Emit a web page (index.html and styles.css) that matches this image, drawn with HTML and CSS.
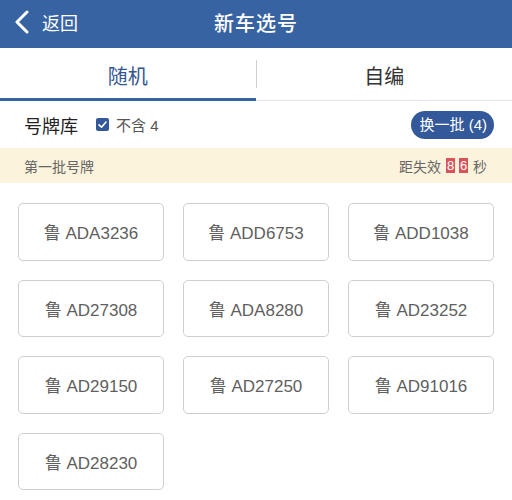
FILE: index.html
```html
<!DOCTYPE html>
<html lang="zh">
<head>
<meta charset="utf-8">
<link rel="stylesheet" href="styles.css">
</head>
<body>
<div class="page">
  <header class="nav">
    <div class="back">
      <svg class="chev" width="16" height="24" viewBox="0 0 16 24"><path d="M13 2 L3 12 L13 22" fill="none" stroke="#fff" stroke-width="3" stroke-linecap="round" stroke-linejoin="round"/></svg>
      <span>返回</span>
    </div>
    <div class="title">新车选号</div>
  </header>
  <div class="tabs">
    <div class="tab active">随机</div>
    <div class="sep"></div>
    <div class="tab">自编</div>
  </div>
  <div class="toolbar">
    <div class="lib">号牌库</div>
    <div class="check">
      <svg width="13" height="13" viewBox="0 0 13 13"><rect width="13" height="13" rx="2" fill="#33599a"/><path d="M3 6.8 L5.5 9.2 L10 4" fill="none" stroke="#fff" stroke-width="1.6" stroke-linecap="round" stroke-linejoin="round"/></svg>
      <span>不含 4</span>
    </div>
    <div class="swap">换一批 (4)</div>
  </div>
  <div class="band">
    <div class="batch">第一批号牌</div>
    <div class="timer">距失效 <span class="digit">8</span><span class="digit">6</span> 秒</div>
  </div>
  <div class="grid">
    <div class="plate">鲁 ADA3236</div>
    <div class="plate">鲁 ADD6753</div>
    <div class="plate">鲁 ADD1038</div>
    <div class="plate">鲁 AD27308</div>
    <div class="plate">鲁 ADA8280</div>
    <div class="plate">鲁 AD23252</div>
    <div class="plate">鲁 AD29150</div>
    <div class="plate">鲁 AD27250</div>
    <div class="plate">鲁 AD91016</div>
    <div class="plate">鲁 AD28230</div>
  </div>
</div>
</body>
</html>
```
FILE: styles.css
```css
* { box-sizing: border-box; }
html, body { margin: 0; padding: 0; background: #fff; }
body {
  font-family: "Liberation Sans", "Noto Sans CJK SC", sans-serif;
  width: 512px;
  height: 500px;
  overflow: hidden;
}
.nav {
  height: 48px;
  background: #3863a2;
  color: #fff;
  display: flex;
  align-items: center;
  justify-content: center;
  position: relative;
  padding-bottom: 4px;
}
.back {
  position: absolute;
  left: 14px;
  top: 0;
  height: 44px;
  display: flex;
  align-items: center;
  gap: 12px;
  font-size: 18px;
}
.title {
  font-size: 20px;
  font-weight: 500;
  letter-spacing: 1px;
}
.tabs {
  height: 53px;
  display: flex;
  align-items: center;
  border-bottom: 1px solid #e6e6e6;
  position: relative;
}
.tab {
  flex: 1;
  height: 100%;
  display: flex;
  align-items: center;
  justify-content: center;
  font-size: 20px;
  color: #333;
  padding-top: 2px;
}
.tab.active {
  color: #34558f;
  border-bottom: 3px solid #3863a2;
  margin-bottom: -1px;
  padding-top: 4px;
}
.sep {
  width: 1px;
  height: 28px;
  background: #d0d0d0;
}
.toolbar {
  height: 47px;
  display: flex;
  align-items: center;
  padding: 0 18px 0 24px;
}
.lib {
  font-size: 18px;
  color: #222;
}
.check {
  display: flex;
  align-items: center;
  gap: 7px;
  margin-left: 18px;
  font-size: 15px;
  color: #555;
}
.check svg { display: block; }
.swap {
  margin-left: auto;
  background: #33599a;
  color: #fff;
  font-size: 15px;
  height: 28px;
  line-height: 28px;
  padding: 0 7px 0 8px;
  border-radius: 14px;
}
.band {
  height: 35px;
  background: #fcf3dc;
  display: flex;
  align-items: center;
  justify-content: space-between;
  padding: 0 25px 0 24px;
  font-size: 14px;
  color: #666;
}
.timer {
  display: flex;
  align-items: center;
}
.digit {
  display: block;
  background: #d9545a;
  color: #fff;
  width: 9px;
  height: 15px;
  line-height: 15px;
  text-align: center;
  font-size: 13px;
  margin-right: 4px;
}
.timer .digit:first-child { margin-left: 5px; }
.timer .digit:last-of-type { margin-right: 5px; }
.grid {
  display: grid;
  grid-template-columns: repeat(3, 146px);
  column-gap: 19px;
  row-gap: 19px;
  padding: 20px 19px 0 18px;
}
.plate {
  height: 57.5px;
  border: 1.5px solid #cfcfcf;
  border-radius: 5px;
  display: flex;
  align-items: center;
  justify-content: center;
  font-size: 17px;
  color: #5f5f5f;
}
```
